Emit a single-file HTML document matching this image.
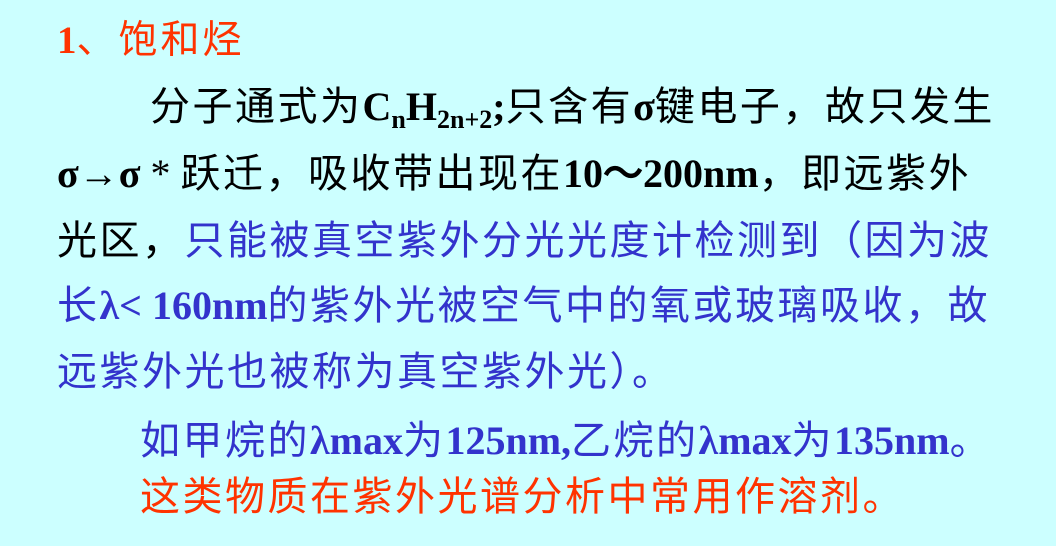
<!DOCTYPE html>
<html><head><meta charset="utf-8"><style>
html,body{margin:0;padding:0}
body{width:1056px;height:546px;background:#ccffff;position:relative;overflow:hidden;font-family:"Liberation Serif","Noto Sans CJK SC",serif;}
.l{position:absolute;white-space:nowrap;font-size:40px;line-height:46px;color:#000}
.c{font-family:"Noto Sans CJK SC","WenQuanYi Zen Hei",sans-serif;font-weight:400;letter-spacing:2.5px}
b{font-family:"Liberation Serif",serif;font-weight:bold}
.bl{color:#3333cc}.rd{color:#ff3300}
sub{font-size:26px;vertical-align:-8px;line-height:0}
</style></head><body>
<div class="l rd" style="left:57px;top:14px;font-size:39px"><b>1</b><span class="c" style="letter-spacing:3px">、饱和烃</span></div>
<div class="l" style="left:150px;top:80px"><span class="c">分子通式为</span><b>C<sub>n</sub>H<sub>2n+2</sub>;</b><span class="c">只含有</span><b>σ</b><span class="c">键电子，故只发生</span></div>
<div class="l" style="left:57px;top:147px"><b>σ→σ</b> * <span class="c">跃迁，吸收带出现在</span><b>10～200nm</b><span class="c">，即远紫外</span></div>
<div class="l" style="left:57px;top:214px"><span class="c">光区，</span><span class="c bl">只能被真空紫外分光光度计检测到（因为波</span></div>
<div class="l bl" style="left:57px;top:279px"><span class="c">长</span><b>λ&lt; 160nm</b><span class="c">的紫外光被空气中的氧或玻璃吸收，故</span></div>
<div class="l bl" style="left:57px;top:345px"><span class="c">远紫外光也被称为真空紫外光）。</span></div>
<div class="l bl" style="left:140px;top:414px"><span class="c">如甲烷的</span><b>λmax</b><span class="c">为</span><b>125nm,</b><span class="c">乙烷的</span><b>λmax</b><span class="c">为</span><b>135nm</b><span class="c">。</span></div>
<div class="l rd" style="left:140px;top:470px"><span class="c">这类物质在紫外光谱分析中常用作溶剂。</span></div>
</body></html>
